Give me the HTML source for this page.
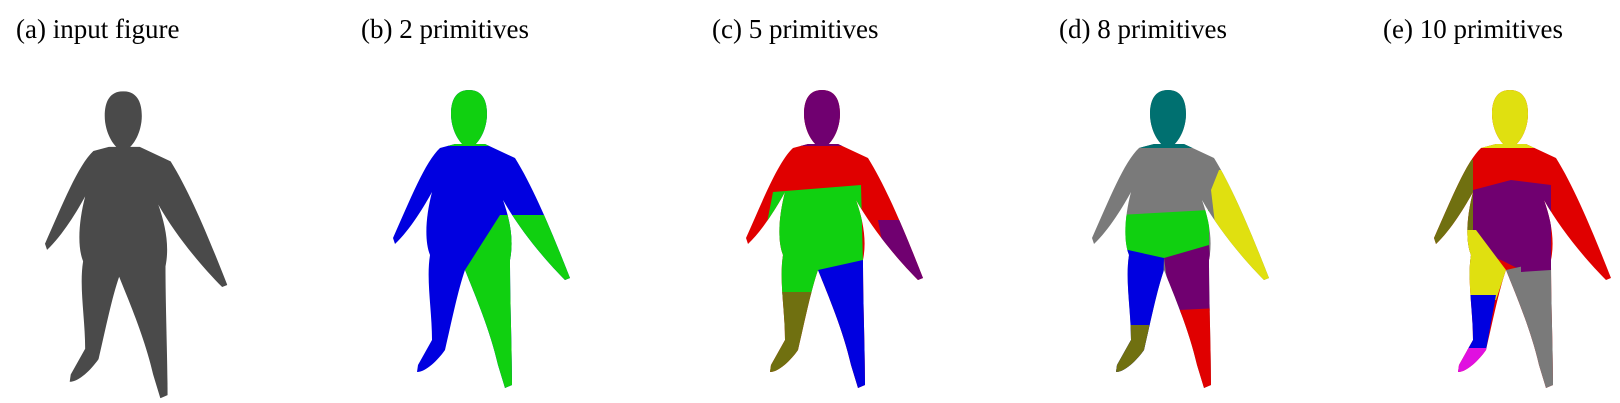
<!DOCTYPE html>
<html><head><meta charset="utf-8"><style>
html,body{margin:0;padding:0;background:#fff;}
body{width:1620px;height:403px;overflow:hidden;position:relative;}
.c{position:absolute;top:14px;font-family:"Liberation Serif",serif;font-size:27px;color:#000;white-space:nowrap;}
svg{position:absolute;left:0;top:0;}
</style></head><body>
<div class="c" style="left:16px">(a) input figure</div>
<div class="c" style="left:361px">(b) 2 primitives</div>
<div class="c" style="left:712px">(c) 5 primitives</div>
<div class="c" style="left:1059px">(d) 8 primitives</div>
<div class="c" style="left:1383px">(e) 10 primitives</div>
<svg width="1620" height="403" viewBox="0 0 1620 403">
<defs>
<clipPath id="b"><path d="M95 64 L80 68 C65 82 50 120 33 158 L35 164 C50 150 65 125 72 112 C66 135 64 160 70 175 C66 200 72 230 72 260 L58 285 L57 292 C66 292 78 280 85 270 C92 240 98 210 105 190 C115 215 130 250 138 285 L145 308 L152 305 C152 270 150 220 150 180 C154 160 150 140 143 120 C160 150 185 180 205 200 L210 198 C195 160 175 110 155 78 L125 64 Z M109 10 C96 10 91 20 91 34 C91 50 100 66 109 68 C118 66 127 50 127 34 C127 20 122 10 109 10 Z"/></clipPath>
</defs>
<!-- a -->
<g transform="translate(11,81) scale(1.03)"><g clip-path="url(#b)"><rect x="0" y="0" width="240" height="320" fill="#4a4a4a"/></g></g>
<!-- b -->
<g transform="translate(360,80)"><g clip-path="url(#b)">
<rect x="0" y="0" width="240" height="320" fill="#0000e0"/>
<rect x="0" y="0" width="240" height="66" fill="#10d010"/>
<polygon points="140,135 220,135 220,320 105,320 105,190" fill="#10d010"/>
</g></g>
<!-- c -->
<g transform="translate(713,80)"><g clip-path="url(#b)">
<rect x="0" y="0" width="240" height="320" fill="#e00000"/>
<rect x="0" y="0" width="240" height="66" fill="#700070"/>
<polygon points="60,112 148,105 150,185 105,195 102,215 40,215" fill="#10d010"/>
<polygon points="105,190 150,180 160,320 110,320" fill="#0000e0"/>
<rect x="40" y="212" width="62" height="100" fill="#707010"/>
<polygon points="165,140 220,140 220,220 180,220" fill="#700070"/>
</g></g>
<!-- d -->
<g transform="translate(1059,80)"><g clip-path="url(#b)">
<rect x="0" y="0" width="240" height="320" fill="#7a7a7a"/>
<rect x="0" y="0" width="240" height="68" fill="#007070"/>
<polygon points="160,90 220,90 220,220 165,220 152,110" fill="#e0e010"/>
<polygon points="60,135 150,130 150,168 105,178 60,170" fill="#10d010"/>
<polygon points="60,168 105,178 100,320 40,320" fill="#0000e0"/>
<polygon points="105,178 150,165 155,230 120,235 108,200" fill="#700070"/>
<polygon points="120,230 160,228 160,320 125,320" fill="#e00000"/>
<rect x="40" y="245" width="50" height="70" fill="#707010"/>
</g></g>
<!-- e -->
<g transform="translate(1401,80)"><g clip-path="url(#b)">
<rect x="0" y="0" width="240" height="320" fill="#e00000"/>
<rect x="0" y="0" width="240" height="68" fill="#e0e010"/>
<polygon points="0,60 72,80 72,200 0,200" fill="#707010"/>
<polygon points="72,110 110,100 150,105 150,180 120,190 100,180 72,170" fill="#700070"/>
<polygon points="60,150 75,150 105,190 95,220 60,220" fill="#e0e010"/>
<polygon points="60,215 95,215 85,270 60,270" fill="#0000e0"/>
<rect x="40" y="268" width="50" height="50" fill="#e010e0"/>
<polygon points="105,190 150,180 160,320 110,320" fill="#7a7a7a"/>
<polygon points="120,180 150,175 150,190 120,192" fill="#700070"/>
</g></g>
</svg>
</body></html>
